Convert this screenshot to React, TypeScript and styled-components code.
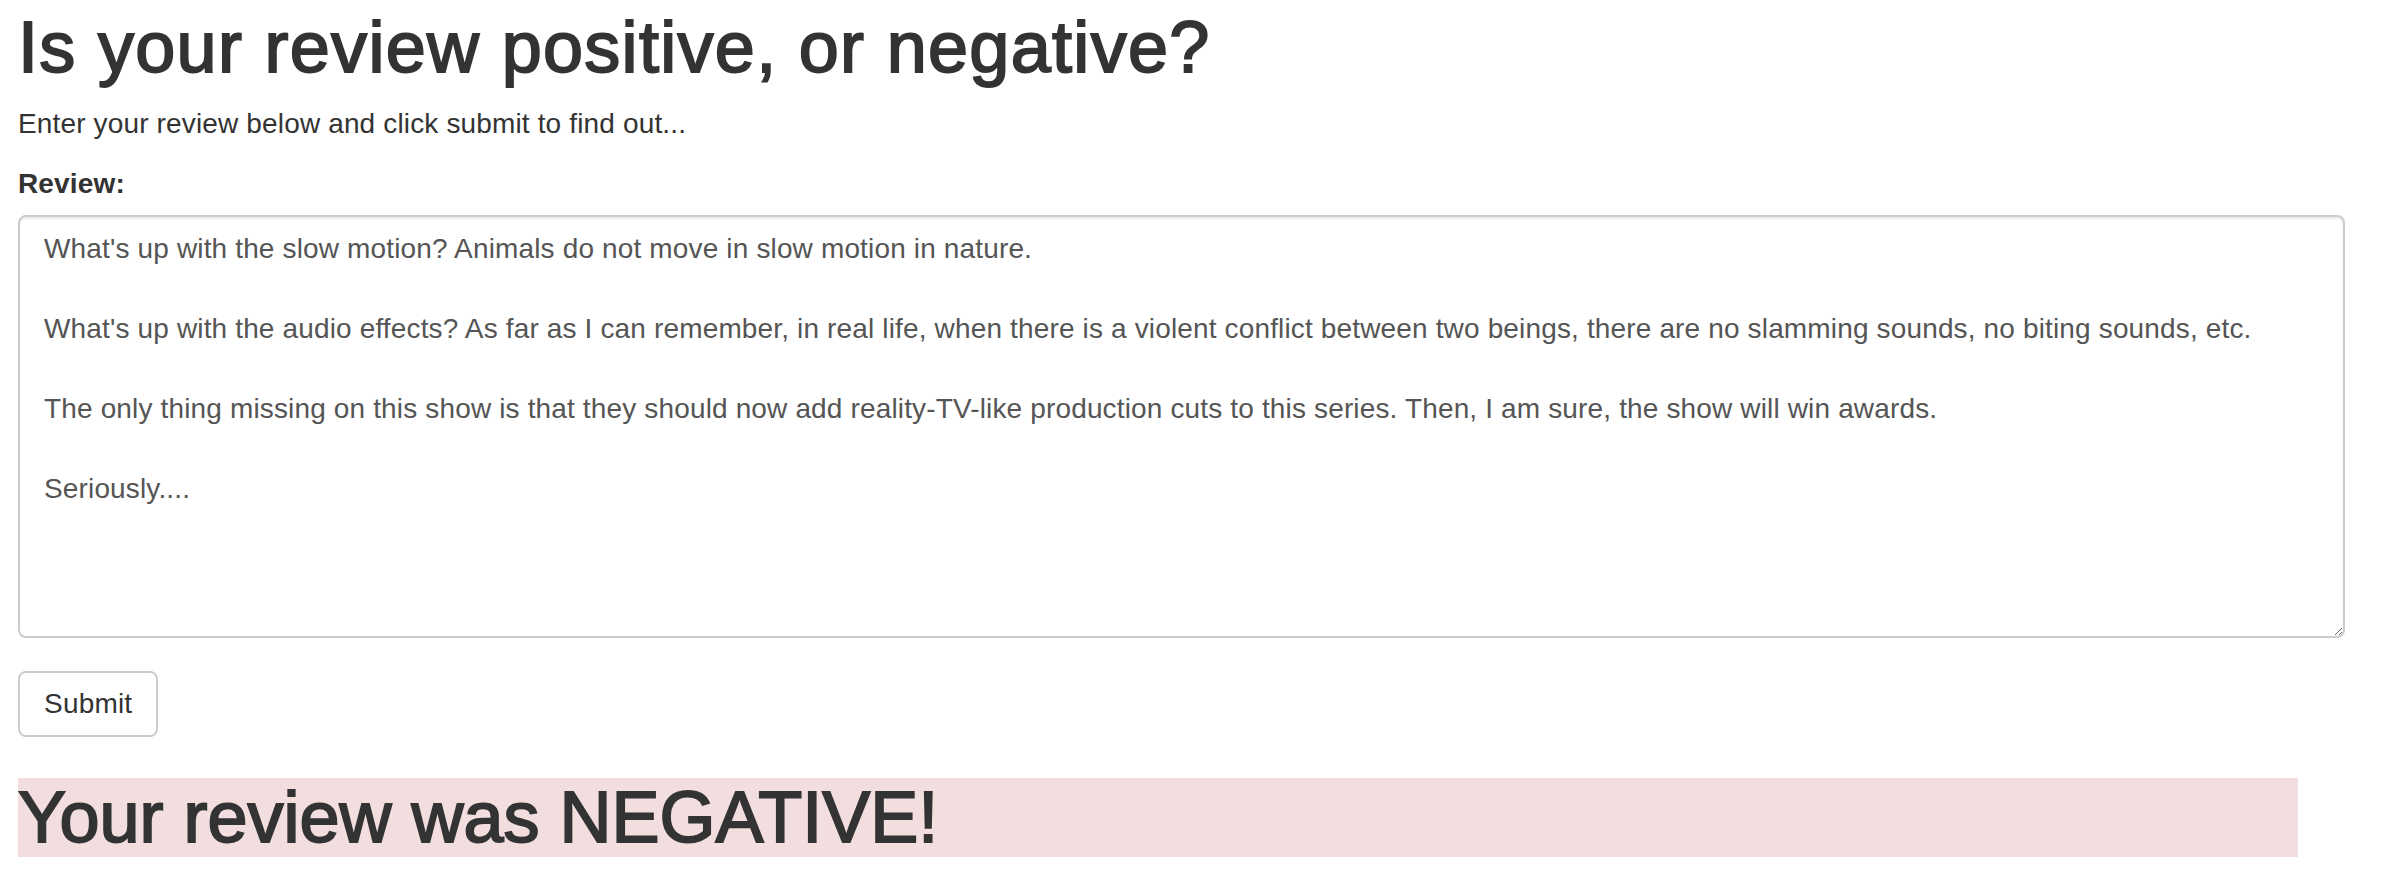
import React from "react";
import styled, { createGlobalStyle } from "styled-components";

const GlobalStyle = createGlobalStyle`
  html, body {
    margin: 0;
    padding: 0;
    background: #fff;
  }

  body {
    font-family: "Liberation Sans", Helvetica, Arial, sans-serif;
    font-size: 28px;
    line-height: 40px;
    letter-spacing: 0.15px;
    color: #333;
  }

  * {
    box-sizing: border-box;
  }
`;

const Page = styled.main`
  padding: 8px 45px 0 18px;
`;

// Helvetica Neue medium look: regular face thickened a little
const Heading = styled.h1`
  font-size: 72px;
  line-height: 1.1;
  font-weight: 500;
  -webkit-text-stroke: 1.9px #333;
  margin: 0;
`;

const Title = styled(Heading)`
  letter-spacing: 1.3px;
  margin-bottom: 17px;
`;

const Lead = styled.p`
  margin: 0 0 20px;
`;

const Form = styled.form`
  display: flex;
  flex-direction: column;
  align-items: flex-start;
`;

const Label = styled.label`
  display: block;
  font-weight: 700;
  margin-bottom: 11px;
`;

const ReviewBox = styled.textarea`
  display: block;
  width: 100%;
  height: 423px;
  margin: 0 0 33px;
  padding: 12px 24px;
  border: 2px solid #ccc;
  border-radius: 8px;
  box-shadow: inset 0 2px 2px rgba(0, 0, 0, 0.075);
  font-family: inherit;
  font-size: 28px;
  line-height: 40px;
  letter-spacing: 0.15px;
  color: #555;
  background: #fff;
  outline: none;
`;

const Button = styled.button`
  padding: 11px 24px;
  border: 2px solid #ccc;
  border-radius: 8px;
  background: #fff;
  color: #333;
  font-family: inherit;
  font-size: 28px;
  line-height: 40px;
  letter-spacing: 0.2px;
  cursor: pointer;
`;

const Verdict = styled(Heading)<{ $tone: "negative" | "positive" }>`
  letter-spacing: 0;
  margin: 41px 47px 0 0;
  background: ${(p) => (p.$tone === "negative" ? "#f2dede" : "#dff0d8")};
`;

const review = `What's up with the slow motion? Animals do not move in slow motion in nature.

What's up with the audio effects? As far as I can remember, in real life, when there is a violent conflict between two beings, there are no slamming sounds, no biting sounds, etc.

The only thing missing on this show is that they should now add reality-TV-like production cuts to this series. Then, I am sure, the show will win awards.

Seriously....`;

export default function App() {
  return (
    <>
      <GlobalStyle />
      <Page>
        <Title>Is your review positive, or negative?</Title>
        <Lead>Enter your review below and click submit to find out...</Lead>
        <Form onSubmit={(e) => e.preventDefault()}>
          <Label htmlFor="review">Review:</Label>
          <ReviewBox id="review" name="review" defaultValue={review} />
          <Button type="submit">Submit</Button>
        </Form>
        <Verdict $tone="negative">Your review was NEGATIVE!</Verdict>
      </Page>
    </>
  );
}
